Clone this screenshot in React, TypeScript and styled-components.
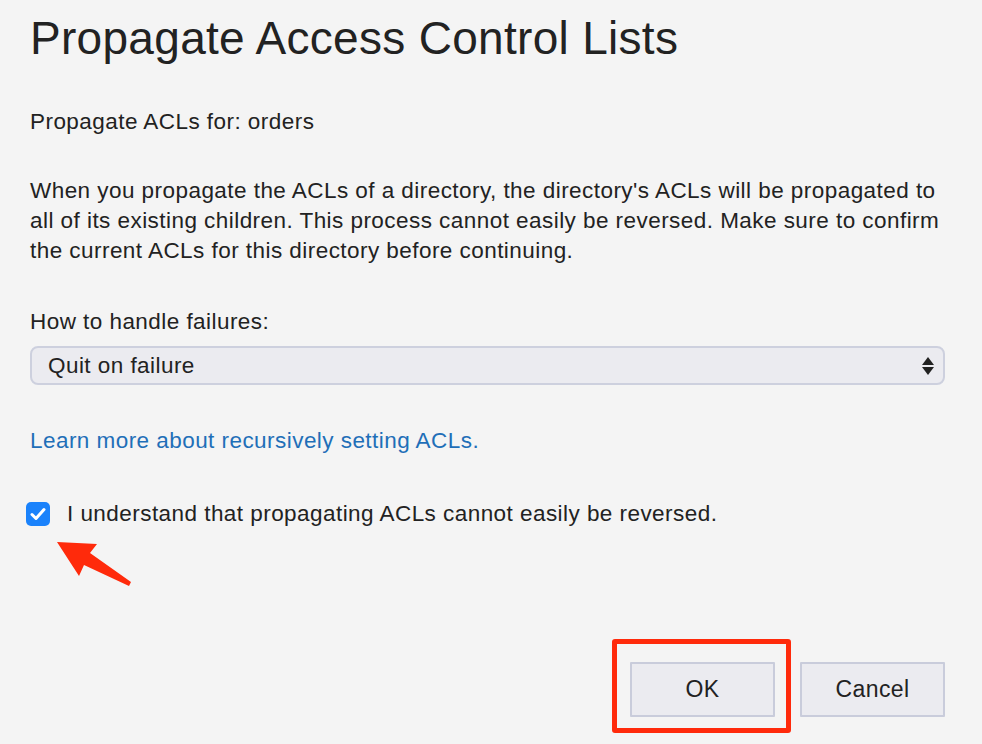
import React from "react";
import styled, { createGlobalStyle } from "styled-components";

const Global = createGlobalStyle`
  html, body { margin: 0; padding: 0; background: #f4f4f4; }
  body { font-family: "Liberation Sans", Arial, sans-serif; color: #222; }
`;

const Page = styled.div`
  position: relative;
  width: 982px;
  height: 744px;
  box-sizing: border-box;
  padding: 10px 37px 0 30px;
  background: #f4f4f4;
  overflow: hidden;
`;

const Title = styled.h1`
  margin: 0;
  font-size: 46px;
  font-weight: 400;
  line-height: 56px;
  color: #222;
  letter-spacing: 0.3px;
`;

const Text = styled.p<{ $mt: number }>`
  margin: ${(p) => p.$mt}px 0 0;
  font-size: 22.5px;
  letter-spacing: 0.45px;
  line-height: 30px;
  color: #222;
  white-space: nowrap;
`;

const SelectBox = styled.div`
  margin-top: 9px;
  height: 39px;
  box-sizing: border-box;
  border: 2px solid #cdd0de;
  border-radius: 8px;
  background: #ebebf0;
  display: flex;
  align-items: center;
  justify-content: space-between;
  padding: 0 8px 0 16px;
  font-size: 22.5px;
  letter-spacing: 0.45px;
  color: #222;
`;

const Link = styled.a`
  display: block;
  margin-top: 41px;
  font-size: 22.5px;
  letter-spacing: 0.45px;
  line-height: 30px;
  color: #1f6fb8;
  text-decoration: none;
`;

const CheckRow = styled.label`
  margin-top: 43px;
  margin-left: -4px;
  display: flex;
  align-items: center;
  gap: 17px;
  font-size: 22.5px;
  letter-spacing: 0.45px;
  line-height: 30px;
  color: #222;
`;

const CheckBox = styled.span`
  width: 24px;
  height: 24px;
  border-radius: 5px;
  background: #1a82fb;
  display: flex;
  align-items: center;
  justify-content: center;
`;

const ButtonRow = styled.div`
  margin-top: 133px;
  display: flex;
  justify-content: flex-end;
  gap: 25px;
`;

const Highlight = styled.div`
  position: relative;
  &::after {
    content: "";
    position: absolute;
    left: -18px;
    right: -16px;
    top: -23px;
    bottom: -16px;
    border: 5px solid #ff2a0b;
    border-radius: 3px;
    pointer-events: none;
  }
`;

const Button = styled.button`
  width: 145px;
  height: 55px;
  box-sizing: border-box;
  border: 2px solid #c9ccdb;
  border-radius: 1px;
  background: #ebebf0;
  font-family: "Liberation Sans", Arial, sans-serif;
  font-size: 23px;
  letter-spacing: 0.4px;
  color: #222;
  padding: 0;
`;

const Arrow = styled.svg`
  position: absolute;
  left: 50px;
  top: 535px;
`;

export default function App() {
  return (
    <Page>
      <Global />
      <Title>Propagate Access Control Lists</Title>
      <Text $mt={41}>Propagate ACLs for: orders</Text>
      <Text $mt={39}>
        When you propagate the ACLs of a directory, the directory's ACLs will be propagated to
        <br />
        all of its existing children. This process cannot easily be reversed. Make sure to confirm
        <br />
        the current ACLs for this directory before continuing.
      </Text>
      <Text $mt={41}>How to handle failures:</Text>
      <SelectBox>
        <span>Quit on failure</span>
        <svg width="14" height="22" viewBox="0 0 14 22">
          <path d="M7 2 L13 10 L1 10 Z" fill="#222" />
          <path d="M1 12 L13 12 L7 20 Z" fill="#222" />
        </svg>
      </SelectBox>
      <Link href="#">Learn more about recursively setting ACLs.</Link>
      <CheckRow>
        <CheckBox>
          <svg width="16" height="14" viewBox="0 0 16 14">
            <path d="M2 7.5 L6 11.5 L14 2.5" fill="none" stroke="#fff" strokeWidth="3" strokeLinecap="round" strokeLinejoin="round" />
          </svg>
        </CheckBox>
        <span>I understand that propagating ACLs cannot easily be reversed.</span>
      </CheckRow>
      <ButtonRow>
        <Highlight>
          <Button>OK</Button>
        </Highlight>
        <Button>Cancel</Button>
      </ButtonRow>
      <Arrow width="90" height="60" viewBox="0 0 90 60">
        <path d="M7 7 L47 9 L40 18 L81 47 L79 51 L34 30 L29 41 Z" fill="#ff2a0b" />
      </Arrow>
    </Page>
  );
}
